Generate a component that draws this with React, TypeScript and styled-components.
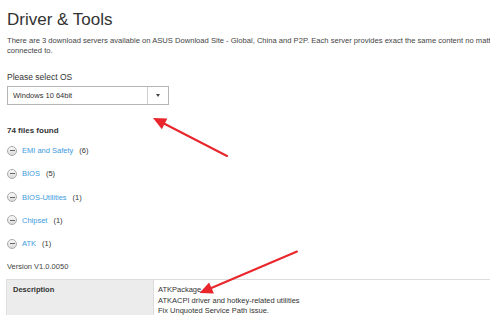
import React from "react";
import styled, { createGlobalStyle } from "styled-components";

const Global = createGlobalStyle`
  html, body { margin: 0; padding: 0; background: #fff; overflow: hidden; }
  body { font-family: "Liberation Sans", Arial, sans-serif; color: #333; }
`;

const Page = styled.div`
  position: relative;
  width: 640px;
  height: 315px;
  padding-left: 7px;
  box-sizing: border-box;
`;

const Title = styled.h1`
  margin: 10px 0 0;
  font-size: 17px;
  line-height: 20px;
  font-weight: normal;
  color: #333;
`;

const Intro = styled.p`
  margin: 6px 0 0;
  font-size: 7.6px;
  line-height: 10px;
  color: #444;
`;

const Label = styled.div`
  margin-top: 16px;
  font-size: 8.5px;
  line-height: 11px;
  color: #333;
`;

const Select = styled.div`
  margin-top: 3px;
  width: 162px;
  height: 19px;
  box-sizing: border-box;
  border: 1px solid #b5b5b5;
  display: flex;
  align-items: stretch;
  background: #fff;
`;

const SelectValue = styled.div`
  flex: 1;
  display: flex;
  align-items: center;
  padding-left: 5px;
  font-size: 7.5px;
  color: #333;
`;

const SelectButton = styled.div`
  width: 20px;
  border-left: 1px solid #cfcfcf;
  display: flex;
  align-items: center;
  justify-content: center;
`;

const Caret = styled.span`
  width: 0;
  height: 0;
  border-left: 2.5px solid transparent;
  border-right: 2.5px solid transparent;
  border-top: 3px solid #444;
`;

const Found = styled.div`
  margin-top: 21px;
  font-size: 8px;
  line-height: 10px;
  font-weight: bold;
  color: #333;
`;

const List = styled.div`
  margin-top: 3px;
  display: flex;
  flex-direction: column;
`;

const Item = styled.div`
  height: 23.25px;
  display: flex;
  align-items: center;
  font-size: 7.5px;
`;

const Toggle = styled.span`
  width: 10px;
  height: 10px;
  box-sizing: border-box;
  border-radius: 50%;
  border: 1px solid #aaa;
  background: linear-gradient(#fafafa, #d9d9d9);
  display: flex;
  align-items: center;
  justify-content: center;
  margin-right: 5px;
  &::after {
    content: "";
    width: 5px;
    height: 1.2px;
    background: #666;
  }
`;

const ItemName = styled.span`
  color: #3d9be0;
`;

const Count = styled.span`
  margin-left: 6px;
  color: #333;
`;

const Version = styled.div`
  margin-top: 7px;
  font-size: 7.5px;
  line-height: 10px;
  color: #444;
`;

const Table = styled.div`
  margin-top: 7px;
  margin-left: -1px;
  display: grid;
  grid-template-columns: 148px 1fr;
  border-top: 1.5px solid #dcdcdc;
  font-size: 7.5px;
  line-height: 10.3px;
`;

const HeadCell = styled.div`
  background: #ececec;
  border-left: 1px solid #e0e0e0;
  border-right: 1px solid #dcdcdc;
  padding: 5px 6px 10px;
  font-weight: bold;
  color: #333;
`;

const DataCell = styled.div`
  padding: 5px 4px 10px;
  color: #333;
`;

const Overlay = styled.svg`
  position: absolute;
  left: 0;
  top: 0;
  pointer-events: none;
`;

const items = [
  { name: "EMI and Safety", count: 6 },
  { name: "BIOS", count: 5 },
  { name: "BIOS-Utilities", count: 1 },
  { name: "Chipset", count: 1 },
  { name: "ATK", count: 1 },
];

export default function App() {
  return (
    <>
      <Global />
      <Page>
        <Title>Driver &amp; Tools</Title>
        <Intro>
          There are 3 download servers available on ASUS Download Site - Global, China and P2P. Each server provides exact the same content no matter which server you
          <br />
          connected to.
        </Intro>
        <Label>Please select OS</Label>
        <Select>
          <SelectValue>Windows 10 64bit</SelectValue>
          <SelectButton>
            <Caret />
          </SelectButton>
        </Select>
        <Found>74 files found</Found>
        <List>
          {items.map((it) => (
            <Item key={it.name}>
              <Toggle />
              <ItemName>{it.name}</ItemName>
              <Count>({it.count})</Count>
            </Item>
          ))}
        </List>
        <Version>Version V1.0.0050</Version>
        <Table>
          <HeadCell>Description</HeadCell>
          <DataCell>
            ATKPackage
            <br />
            ATKACPI driver and hotkey-related utilities
            <br />
            Fix Unquoted Service Path issue.
          </DataCell>
        </Table>
        <Overlay width="490" height="315" viewBox="0 0 490 315">
          <g stroke="#e8262b" strokeWidth="2" fill="#e8262b" strokeLinecap="round">
            <line x1="227" y1="146" x2="162" y2="112.5" />
            <polygon points="153,108 167.3,108.6 161.9,119.2" stroke="none" />
            <line x1="297" y1="241.5" x2="209" y2="279" />
            <polygon points="199.5,283 213.9,283.4 209.1,272.4" stroke="none" />
          </g>
        </Overlay>
      </Page>
    </>
  );
}
